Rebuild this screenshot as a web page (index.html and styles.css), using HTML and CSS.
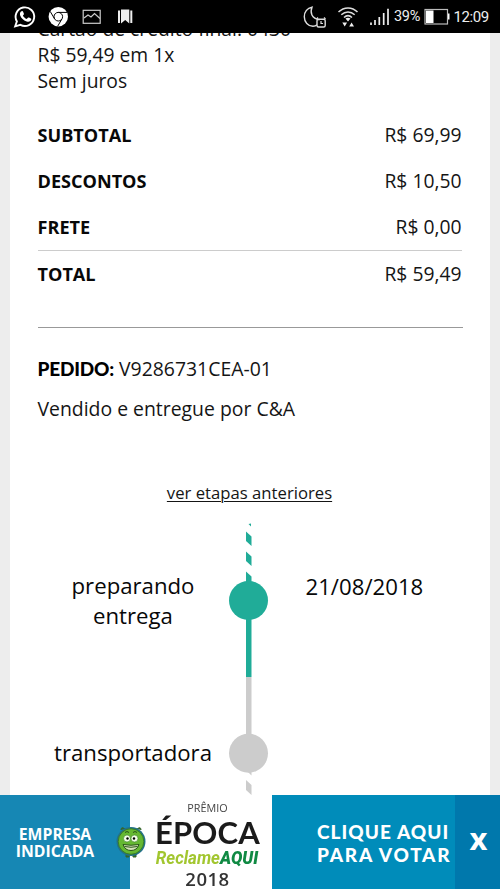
FILE: index.html
```
<!DOCTYPE html>
<html lang="pt-BR">
<head>
<meta charset="utf-8">
<meta name="viewport" content="width=device-width">
<title>Pedido</title>
<link rel="stylesheet" href="styles.css">
</head>
<body>
<header class="status">
  <svg class="status-icons" width="140" height="33" viewBox="0 0 140 33" fill="none" stroke="#fff">
    <path d="M15.200 26.300l1.700-4.900a9.300 9.300 0 1 1 3.500 3.400z" stroke-width="1.900"/>
    <path d="M21 11.600c1-.9 1.800-.7 2.200.3l.7 1.800c.2.600-.2 1-1 1.800.8 1.700 2 2.800 3.800 3.500l1.200-1.300c.4-.4.7-.4 1.200-.1l1.800.9c.6.400.5.800.2 1.600-.8 1.700-2.600 2-4.500 1.300-3.200-1.100-5.400-3.300-6.400-6-.5-1.500-.2-2.900.8-3.800z" fill="#fff" stroke="none"/>
    <circle cx="58.300" cy="16.700" r="9.700" fill="#fff" stroke="none"/>
    <g stroke="#000" stroke-width="1"><circle cx="58.300" cy="16.700" r="4.300"/><path d="M58.300 12.400h8.700M54.600 18.900l-4.400-7.500M62 18.900l-4.400 7.400"/></g>
    <rect x="83.200" y="10.300" width="17" height="13" stroke-width="1.200" stroke="#ccc"/>
    <path d="M84 18l4-3 3 2 3.500-3.500 5.500 5" stroke-width="1.200" stroke="#ccc"/>
    <path d="M121 9.500h8.300v14l-4.100-3.500-4.200 3.500zM118 10.500h2v12.500h-2zM130.300 10.500h2v12.500h-2z" fill="#eee" stroke="none"/>
  </svg>
  <div class="status-right">
    <svg width="88" height="33" viewBox="302 0 88 33" fill="none" stroke="#ddd">
      <path d="M317 24.800c-1 .9-2.400 1.400-4 1.400-5 0-8.700-4.200-8.700-9.500 0-4.700 3-8.500 7.700-9.500-2.200 5.300-.5 11.500 7.500 12.500" stroke-width="1.400"/>
      <rect x="317" y="19.300" width="8.200" height="7.700" rx="1.500" stroke-width="1.400"/><path d="M321 21v2.500h2M316.500 19l1.500-1.500M325.500 19l-1.500-1.500" stroke-width="1.200"/>
      <path d="M338.500 12c5.500-5.400 13.500-5.400 19 0M341.300 14.800c4-3.800 9.400-3.800 13.400 0M344 17.500c2.500-2.300 5.500-2.300 8 0" stroke-width="1.500"/>
      <path d="M345.500 18.500q2.500-1.500 5 0l-2.500 3zM342.300 22.500h4.800l-2.400 4zM349.200 26.500h4.800l-2.400-4z" fill="#eee" stroke="none"/>
      <path d="M371 22.500v2.500M375 20v5M379.300 17v8M383.700 13v12M388 8.800v16.200" stroke-width="1.700" stroke="#eee"/>
    </svg>
    <span class="pct">39%</span>
    <svg width="26" height="33" viewBox="424 0 26 33"><rect x="425" y="9.500" width="22.500" height="14.500" fill="none" stroke="#bbb" stroke-width="1.200"/><path d="M426 10.500h7.500v12.500H426zM448 13.500h1.500v6H448z" fill="#fff"/></svg>
    <span class="clock">12:09</span>
  </div>
</header>
<main class="page">
  <div class="payment">
    <p>Cartão de crédito final: 0430</p>
    <p>R$ 59,49 em 1x</p>
    <p>Sem juros</p>
  </div>
  <dl class="totals">
    <div class="row"><dt>SUBTOTAL</dt><dd>R$ 69,99</dd></div>
    <div class="row"><dt>DESCONTOS</dt><dd>R$ 10,50</dd></div>
    <div class="row"><dt>FRETE</dt><dd>R$ 0,00</dd></div>
    <div class="row total"><dt>TOTAL</dt><dd>R$ 59,49</dd></div>
  </dl>
  <section class="order">
    <p class="number"><b>PEDIDO:</b> V9286731CEA-01</p>
    <p class="seller">Vendido e entregue por C&amp;A</p>
  </section>
  <p class="previous"><a>ver etapas anteriores</a></p>
  <section class="timeline">
    <div class="labels">
      <p class="step-one">preparando<br>entrega</p>
      <p class="step-two">transportadora</p>
    </div>
    <svg class="track" width="40" height="280" viewBox="0 0 40 280">
      <path d="M19.500 4l2.500-.5v3zM17 11.500l5.500 5v9.500l-5.500-5zM17 31.500l5.500 5v9.500l-5.500-5zM17 51.500l5.500 5v8h-5.500z" fill="#20ac98"/>
      <path d="M17 95h5.500v62h-5.500z" fill="#20ac98"/><circle cx="19.500" cy="80.500" r="19.500" fill="#20ac98"/>
      <path d="M17 157h5.500v60h-5.500zM17 250l5.500 5.500v-4zM17 260l5.500 5v10l-5.500-5z" fill="#ccc"/><circle cx="19.500" cy="233.300" r="19.500" fill="#ccc"/>
    </svg>
    <p class="date">21/08/2018</p>
  </section>
</main>
<aside class="banner">
  <div class="nominee"><span>EMPRESA</span><span>INDICADA</span></div>
  <div class="award">
    <span class="prize">PRÊMIO</span>
    <span class="epoca">ÉPOCA</span>
    <span class="reclame">Reclame<b>AQUI</b></span>
    <span class="year">2018</span>
    <svg class="mascot" width="32" height="36" viewBox="0 0 32 36">
      <path d="M10 5q-4-3-4 1M22 5q4-3 4 1M11 30v3h3v-3M18 30v3h3v-3" fill="#35662b" stroke="#35662b"/>
      <ellipse cx="16" cy="17.500" rx="14.500" ry="14.500" fill="#23718a"/><circle cx="16" cy="17.500" r="12.800" fill="#65b832" stroke="#397e25"/>
      <circle cx="12" cy="14.500" r="3.500" fill="#f4ffe9" stroke="#397e25" stroke-width=".6"/><circle cx="19.500" cy="14.500" r="3.500" fill="#f4ffe9" stroke="#397e25" stroke-width=".6"/><circle cx="12.500" cy="14.500" r="1.200"/><circle cx="19" cy="14.500" r="1.200"/>
      <path d="M8 20.500q8 1.500 16 0-2 6-8 6t-8-6z" fill="#d5e5b8" stroke="#285519"/><path d="M9.500 22.500q6.500 1.500 13 0M10 8.500q2-2 4 0M18 8.500q2-2 4 0" fill="none" stroke="#285519"/>
    </svg>
  </div>
  <div class="vote"><span>CLIQUE AQUI</span><span class="vote-second">PARA VOTAR</span></div>
  <div class="close">x</div>
</aside>
</body>
</html>
```
FILE: styles.css
```
* { box-sizing: border-box; }
body { margin: 0; height: 889px; overflow: hidden; background: #ededed; color: #151515; font-family: "Open Sans", sans-serif; font-size: 19.3px; line-height: 26px; }
p, dl, dd { margin: 0; }
.status { position: fixed; z-index: 2; top: 0; left: 0; width: 500px; height: 33px; display: flex; justify-content: space-between; background: #000; color: #eee; font-family: Roboto, sans-serif; line-height: 34px; }
.status-right { display: flex; width: 198px; }
.pct { width: 34px; padding-left: 4px; font-size: 14.5px; letter-spacing: -.3px; }
.clock { padding-left: 3.5px; font-size: 15px; letter-spacing: -.4px; white-space: nowrap; }
.status-right svg { flex: none; }
.page { width: 480px; height: 889px; margin-left: 10px; padding: 16px 28px 0 27.5px; background: #fff; overflow: hidden; }
.totals { margin-top: 18px; border-bottom: 1px solid #999; height: 216px; width: 425px; }
.row { display: flex; justify-content: space-between; width: 424px; height: 46px; line-height: 46px; }
.row dt { font-weight: 700; font-size: 18.1px; color: #080808; }
.total { height: 47px; border-top: 1px solid #ccc; }
.order { margin-top: 28px; }
.number { font-size: 19.4px; white-space: nowrap; }
.number b { font: 900 19px/26px Lato, sans-serif; letter-spacing: -.2px; color: #000; }
.seller { margin-top: 14px; font-size: 19.4px; }
.previous { margin-top: 58px; width: 424px; text-align: center; font-size: 16.7px; }
.previous a { text-decoration: underline; text-underline-offset: 2px; text-decoration-thickness: 1px; }
.timeline { display: flex; margin-top: 14px; font-size: 22.2px; line-height: 30px; color: #080808; }
.labels { width: 191px; text-align: center; }
.step-one { padding-top: 51px; }
.step-two { padding-top: 107px; }
.track { flex: none; margin-left: .5px; }
.date { padding: 52px 0 0 36.5px; }
.banner { position: fixed; z-index: 2; left: 0; bottom: 0; width: 500px; height: 94px; display: grid; grid-template-columns: 130px 142px 183px 45px; color: #fff; font-weight: 700; }
.nominee { display: flex; flex-direction: column; align-items: center; background: #1687b4; padding: 30.5px 20px 0 0; font: 700 15.8px/17.5px "Open Sans", sans-serif; }
.award { position: relative; background: #fff; display: flex; flex-direction: column; align-items: center; padding: 5px 0 0 13px; color: #1b1b1b; }
.prize { font-size: 10.8px; line-height: 16px; font-weight: 400; color: #444; }
.epoca { font: 700 31px/32px Lato, sans-serif; letter-spacing: .2px; }
.reclame { font: italic 700 18.2px/20px Roboto, sans-serif; color: #a2c62f; transform: scaleX(.93); }
.reclame b { font-weight: 900; color: #108a43; }
.year { font-size: 18.5px; line-height: 21px; font-weight: 600; color: #333; letter-spacing: .5px; }
.mascot { position: absolute; left: -15px; top: 29px; }
.vote { display: flex; flex-direction: column; background: #008cba; padding: 25px 0 0 45px; font: 900 19px/23px Lato, sans-serif; letter-spacing: 1.05px; white-space: nowrap; }
.vote-second { letter-spacing: 1.75px; }
.close { background: #0078ac; text-align: center; font-size: 31px; line-height: 86px; padding-left: 2px; }
```
